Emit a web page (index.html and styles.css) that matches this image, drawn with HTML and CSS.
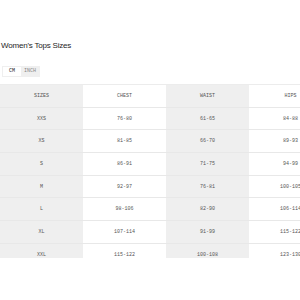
FILE: index.html
```html
<!DOCTYPE html>
<html lang="en">
<head>
    <meta charset="UTF-8">
    <meta name="viewport" content="width=device-width, initial-scale=1.0">
    <title>Women's Tops Sizes</title>
    <link rel="stylesheet" href="styles.css">
</head>
<body>
    <main class="size-guide">
        <h1 class="title">Women's Tops Sizes</h1>

        <div class="unit-toggle">
            <button class="unit active">CM</button>
            <button class="unit">INCH</button>
        </div>

        <div class="table-wrap">
            <table class="size-table">
                <thead>
                    <tr>
                        <th>SIZES</th>
                        <th>CHEST</th>
                        <th>WAIST</th>
                        <th>HIPS</th>
                    </tr>
                </thead>
                <tbody>
                    <tr><td>XXS</td><td>76-80</td><td>61-65</td><td>84-88</td></tr>
                    <tr><td>XS</td><td>81-85</td><td>66-70</td><td>89-93</td></tr>
                    <tr><td>S</td><td>86-91</td><td>71-75</td><td>94-99</td></tr>
                    <tr><td>M</td><td>92-97</td><td>76-81</td><td>100-105</td></tr>
                    <tr><td>L</td><td>98-106</td><td>82-90</td><td>106-114</td></tr>
                    <tr><td>XL</td><td>107-114</td><td>91-99</td><td>115-122</td></tr>
                    <tr><td>XXL</td><td>115-122</td><td>100-108</td><td>123-130</td></tr>
                </tbody>
            </table>
        </div>
    </main>
</body>
</html>
```

FILE: styles.css
```css
body {
    margin: 0;
    padding: 0;
    background: #ffffff;
    font-family: "Liberation Sans", Arial, sans-serif;
    color: #222;
}

.size-guide {
    padding-top: 41px;
}

/* Heading */
.title {
    margin: 0 0 15px 1px;
    font-size: 8px;
    line-height: 10px;
    font-weight: normal;
    letter-spacing: -0.2px;
    color: #1e1e1e;
}

/* CM / INCH switch */
.unit-toggle {
    display: flex;
    width: max-content;
    margin-left: 2px;
    padding: 1px;
    background: #efefef;
}

.unit {
    display: block;
    border: none;
    background: transparent;
    font-family: "Liberation Mono", monospace;
    font-size: 5px;
    line-height: 9px;
    color: #888;
    width: 18px;
    height: 9px;
    padding: 0;
    cursor: pointer;
}

.unit.active {
    background: #ffffff;
    color: #222;
}

/* Table */
.table-wrap {
    margin-top: 7px;
    height: 173px;
    overflow: hidden;
    border-top: 1px solid #ececec;
}

.size-table {
    border-collapse: collapse;
    table-layout: fixed;
    width: 332px;
    font-family: "Liberation Mono", monospace;
    font-size: 5px;
    color: #555;
}

.size-table th,
.size-table td {
    width: 83px;
    height: 21.7px;
    padding: 0;
    text-align: center;
    font-weight: normal;
    border-bottom: 1px solid #e8e8e8;
}

.size-table th:nth-child(odd),
.size-table td:nth-child(odd) {
    background: #efefef;
}
```
